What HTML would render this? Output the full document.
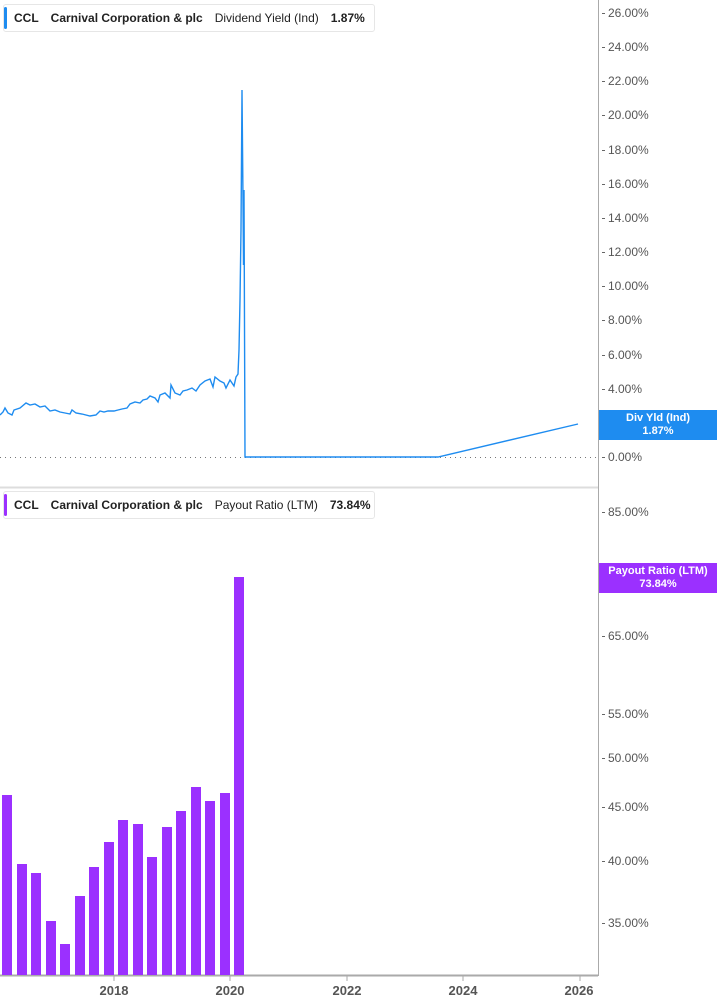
<!DOCTYPE html>
<html><head><style>
body{margin:0;width:717px;height:1005px;background:#fff;font-family:"Liberation Sans",sans-serif;position:relative;overflow:hidden}
.leg{position:absolute;left:3px;height:26px;border:1px solid #e6e6e6;border-radius:3px;background:#fff;font-size:12px;font-weight:bold;color:#222;line-height:26px;padding-left:10px;white-space:nowrap}
.leg i{position:absolute;left:0;top:2px;bottom:2px;width:3px;border-radius:2px}
.leg span{margin-right:12px}
.n{font-weight:normal}
.yl{position:absolute;left:608px;font-size:12px;color:#555;transform:translateY(-50%)}
.yl:before{content:"";position:absolute;left:-6px;top:50%;width:3px;height:1px;background:#666}
.xl{position:absolute;top:983px;font-size:13px;font-weight:bold;color:#555;transform:translateX(-50%)}
.tag{position:absolute;left:599px;width:118px;color:#fff;font-size:11px;font-weight:bold;text-align:center;line-height:13px;padding:2px 0}
</style></head><body>
<svg width="717" height="1005" style="position:absolute;left:0;top:0">
<line x1="598.5" y1="0" x2="598.5" y2="976" stroke="#aaa"/>
<line x1="0" y1="487.5" x2="598" y2="487.5" stroke="#ddd" stroke-width="2"/>
<line x1="0" y1="975.5" x2="598" y2="975.5" stroke="#aaa" stroke-width="2"/>
<line x1="0" y1="457.5" x2="598" y2="457.5" stroke="#777" stroke-dasharray="1,4"/>
<g stroke="#aaa"><line x1="114" y1="976" x2="114" y2="981"/><line x1="230" y1="976" x2="230" y2="981"/><line x1="347" y1="976" x2="347" y2="981"/><line x1="463" y1="976" x2="463" y2="981"/><line x1="580" y1="976" x2="580" y2="981"/></g>
<polyline fill="none" stroke="#1e8cf0" stroke-width="1.4" points="0,415 3,412 5,408 8,413 12,415 14,410 20,408 26,403 30,405 35,404 40,407 45,406 50,411 55,410 60,412 65,413 70,414 72,410 76,413 82,414 90,416 96,415 100,411 104,412 108,411 114,411 118,410 122,409 127,408 130,404 135,402 140,403 143,400 147,399 150,396 155,398 158,402 160,395 165,393 170,398 171,385 175,393 180,395 183,391 187,390 192,388 196,391 200,385 205,381 210,379 213,387 215,377 220,381 224,383 226,388 230,380 234,386 236,377 238,374 239,350 240,300 241,230 242,90 243,200 243.5,265 244,190 245,457 438,457 578,424"/>
<g fill="#9b30ff">
<rect x="2" y="795" width="10" height="180"/><rect x="17" y="864" width="10" height="111"/><rect x="31" y="873" width="10" height="102"/><rect x="46" y="921" width="10" height="54"/><rect x="60" y="944" width="10" height="31"/><rect x="75" y="896" width="10" height="79"/><rect x="89" y="867" width="10" height="108"/><rect x="104" y="842" width="10" height="133"/><rect x="118" y="820" width="10" height="155"/><rect x="133" y="824" width="10" height="151"/><rect x="147" y="857" width="10" height="118"/><rect x="162" y="827" width="10" height="148"/><rect x="176" y="811" width="10" height="164"/><rect x="191" y="787" width="10" height="188"/><rect x="205" y="801" width="10" height="174"/><rect x="220" y="793" width="10" height="182"/><rect x="234" y="577" width="10" height="398"/>
</g>
</svg>
<div class="leg" style="top:4px;width:360px"><i style="background:#1e8cf0"></i><span>CCL</span><span>Carnival Corporation &amp; plc</span><span class="n">Dividend Yield (Ind)</span>1.87%</div>
<div class="leg" style="top:491px;width:360px"><i style="background:#9b30ff"></i><span>CCL</span><span>Carnival Corporation &amp; plc</span><span class="n">Payout Ratio (LTM)</span>73.84%</div>
<div class="yl" style="top:13px">26.00%</div><div class="yl" style="top:47px">24.00%</div><div class="yl" style="top:81px">22.00%</div><div class="yl" style="top:115px">20.00%</div><div class="yl" style="top:150px">18.00%</div><div class="yl" style="top:184px">16.00%</div><div class="yl" style="top:218px">14.00%</div><div class="yl" style="top:252px">12.00%</div><div class="yl" style="top:286px">10.00%</div><div class="yl" style="top:320px">8.00%</div><div class="yl" style="top:355px">6.00%</div><div class="yl" style="top:389px">4.00%</div><div class="yl" style="top:457px">0.00%</div>
<div class="yl" style="top:512px">85.00%</div><div class="yl" style="top:636px">65.00%</div><div class="yl" style="top:714px">55.00%</div><div class="yl" style="top:758px">50.00%</div><div class="yl" style="top:807px">45.00%</div><div class="yl" style="top:861px">40.00%</div><div class="yl" style="top:923px">35.00%</div>
<div class="tag" style="top:410px;background:#1e8cf0">Div Yld (Ind)<br>1.87%</div>
<div class="tag" style="top:563px;background:#9b30ff">Payout Ratio (LTM)<br>73.84%</div>
<div class="xl" style="left:114px">2018</div><div class="xl" style="left:230px">2020</div><div class="xl" style="left:347px">2022</div><div class="xl" style="left:463px">2024</div><div class="xl" style="left:579px">2026</div>
</body></html>
